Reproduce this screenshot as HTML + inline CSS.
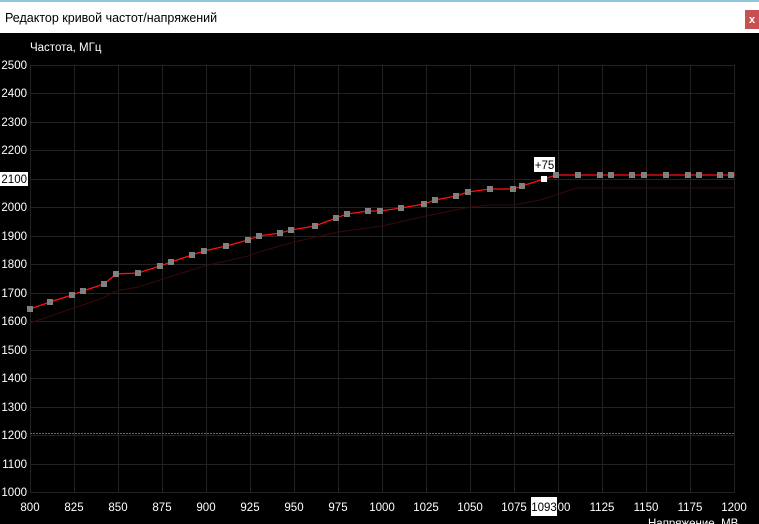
<!DOCTYPE html>
<html><head><meta charset="utf-8"><style>
html,body{margin:0;padding:0;width:759px;height:524px;overflow:hidden;background:#000;font-family:"Liberation Sans",sans-serif}
</style></head><body>
<svg width="759" height="524" xmlns="http://www.w3.org/2000/svg" style="position:absolute;left:0;top:0">
<rect x="0" y="0" width="759" height="524" fill="#000"/>
<rect x="0" y="0" width="759" height="33" fill="#fff"/>
<rect x="0" y="0" width="759" height="2" fill="#8fc6dc"/>
<text x="5" y="22" font-size="12.5" fill="#000">Редактор кривой частот/напряжений</text>
<rect x="745" y="10" width="14" height="19" fill="#c75050"/>
<text x="749" y="23" font-size="11" font-weight="bold" fill="#fff">x</text>
<text x="30" y="51" font-size="11.5" fill="#fff">Частота, МГц</text>
<g stroke="#222" stroke-width="1">
<path d="M30.5 64.5V493M74.5 64.5V493M118.5 64.5V493M162.5 64.5V493M206.5 64.5V493M250.5 64.5V493M294.5 64.5V493M338.5 64.5V493M382.5 64.5V493M426.5 64.5V493M470.5 64.5V493M514.5 64.5V493M558.5 64.5V493M602.5 64.5V493M646.5 64.5V493M690.5 64.5V493M734.5 64.5V493"/>
<path d="M30 65.5H735M30 93.5H735M30 122.5H735M30 150.5H735M30 179.5H735M30 207.5H735M30 236.5H735M30 264.5H735M30 293.5H735M30 321.5H735M30 350.5H735M30 378.5H735M30 407.5H735M30 435.5H735M30 464.5H735M30 492.5H735"/>
</g>
<g font-size="11.5" fill="#fff" text-anchor="end">
<text x="27" y="69">2500</text><text x="27" y="97">2400</text><text x="27" y="126">2300</text><text x="27" y="154">2200</text>
<rect x="0" y="172" width="28" height="14" fill="#fff"/><text x="27" y="183" fill="#000">2100</text>
<text x="27" y="211">2000</text><text x="27" y="240">1900</text><text x="27" y="268">1800</text><text x="27" y="297">1700</text><text x="27" y="325">1600</text><text x="27" y="354">1500</text><text x="27" y="382">1400</text><text x="27" y="411">1300</text><text x="27" y="439">1200</text><text x="27" y="468">1100</text><text x="27" y="496">1000</text>
</g>
<g font-size="11.5" fill="#fff" text-anchor="middle">
<text x="30" y="511">800</text><text x="74" y="511">825</text><text x="118" y="511">850</text><text x="162" y="511">875</text><text x="206" y="511">900</text><text x="250" y="511">925</text><text x="294" y="511">950</text><text x="338" y="511">975</text><text x="382" y="511">1000</text><text x="426" y="511">1025</text><text x="470" y="511">1050</text><text x="514" y="511">1075</text><text x="558" y="511">1100</text><text x="602" y="511">1125</text><text x="646" y="511">1150</text><text x="690" y="511">1175</text><text x="734" y="511">1200</text>
</g>
<rect x="531" y="497" width="26" height="19" fill="#fff"/>
<text x="544" y="511" font-size="11.5" fill="#000" text-anchor="middle">1093</text>
<text x="648" y="527" font-size="11.5" fill="#fff">Напряжение, МВ</text>
<path d="M30 433.5H735" stroke="#ff2020" stroke-width="1" stroke-dasharray="2,1"/>
<polyline fill="none" stroke="#3a0808" stroke-width="1" points="30,323 103,298 116,291 138,287 160,280 204,266 248,256 259,252 294,242 338,232 382,226 426,216 470,207 490,205 514,205 540,200 556,195 576,188 735,188"/>
<polyline fill="none" stroke="#ff1010" stroke-width="1.3" points="30,309 50,302 72,295 83,291 104,284 116,274 138,273 160,266 171,262 192,255 204,251 226,246 248,240 259,236 280,233 291,230 315,226 336,218 347,214 368,211 380,211 401,208 424,204 435,200 456,196 468,192 490,189 513,189 522,186 544,179 556,175 735,175"/>
<g fill="#808080">
<rect x="27" y="306" width="6" height="6"/><rect x="47" y="299" width="6" height="6"/><rect x="69" y="292" width="6" height="6"/><rect x="80" y="288" width="6" height="6"/><rect x="101" y="281" width="6" height="6"/><rect x="113" y="271" width="6" height="6"/><rect x="135" y="270" width="6" height="6"/><rect x="157" y="263" width="6" height="6"/><rect x="168" y="259" width="6" height="6"/><rect x="189" y="252" width="6" height="6"/><rect x="201" y="248" width="6" height="6"/><rect x="223" y="243" width="6" height="6"/><rect x="245" y="237" width="6" height="6"/><rect x="256" y="233" width="6" height="6"/><rect x="277" y="230" width="6" height="6"/><rect x="288" y="227" width="6" height="6"/><rect x="312" y="223" width="6" height="6"/><rect x="333" y="215" width="6" height="6"/><rect x="344" y="211" width="6" height="6"/><rect x="365" y="208" width="6" height="6"/><rect x="377" y="208" width="6" height="6"/><rect x="398" y="205" width="6" height="6"/><rect x="421" y="201" width="6" height="6"/><rect x="432" y="197" width="6" height="6"/><rect x="453" y="193" width="6" height="6"/><rect x="465" y="189" width="6" height="6"/><rect x="487" y="186" width="6" height="6"/><rect x="510" y="186" width="6" height="6"/><rect x="519" y="183" width="6" height="6"/>
<rect x="553" y="172" width="6" height="6"/><rect x="575" y="172" width="6" height="6"/><rect x="597" y="172" width="6" height="6"/><rect x="608" y="172" width="6" height="6"/><rect x="629" y="172" width="6" height="6"/><rect x="641" y="172" width="6" height="6"/><rect x="663" y="172" width="6" height="6"/><rect x="685" y="172" width="6" height="6"/><rect x="696" y="172" width="6" height="6"/><rect x="717" y="172" width="6" height="6"/><rect x="728" y="172" width="6" height="6"/>
</g>
<rect x="541" y="176" width="6" height="6" fill="#fff"/>
<rect x="534" y="157" width="21" height="15" fill="#fff"/>
<text x="544.5" y="169" font-size="11.5" fill="#000" text-anchor="middle">+75</text>
</svg>
</body></html>
